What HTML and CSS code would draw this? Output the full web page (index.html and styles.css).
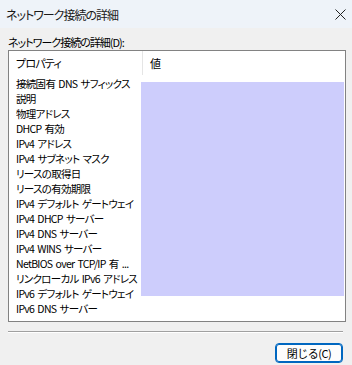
FILE: index.html
```html
<!DOCTYPE html>
<html lang="ja">
<head>
<meta charset="UTF-8">
<title>ネットワーク接続の詳細</title>
<link rel="stylesheet" href="styles.css">
</head>
<body>
<div class="dialog">
    <div class="titlebar">
        <span class="title">ネットワーク接続の詳細</span>
        <span class="close">
            <svg width="11" height="11" viewBox="0 0 11 11"><path d="M0.5 0.5 L10.5 10.5 M10.5 0.5 L0.5 10.5" stroke="#222" stroke-width="1" fill="none"/></svg>
        </span>
    </div>

    <div class="content">
        <div class="caption">ネットワーク接続の詳細(D):</div>
        <div class="listbox">
            <div class="header">
                <div class="col-name">プロパティ</div>
                <div class="col-value">値</div>
            </div>
            <div class="rows">
                <ul class="names">
                    <li>接続固有 DNS サフィックス</li>
                    <li>説明</li>
                    <li>物理アドレス</li>
                    <li>DHCP 有効</li>
                    <li>IPv4 アドレス</li>
                    <li>IPv4 サブネット マスク</li>
                    <li>リースの取得日</li>
                    <li>リースの有効期限</li>
                    <li>IPv4 デフォルト ゲートウェイ</li>
                    <li>IPv4 DHCP サーバー</li>
                    <li>IPv4 DNS サーバー</li>
                    <li>IPv4 WINS サーバー</li>
                    <li>NetBIOS over TCP/IP 有 ...</li>
                    <li>リンクローカル IPv6 アドレス</li>
                    <li>IPv6 デフォルト ゲートウェイ</li>
                    <li>IPv6 DNS サーバー</li>
                </ul>
                <div class="values">
                    <div class="hidden-values"></div>
                </div>
            </div>
        </div>
        <div class="separator"></div>
        <div class="buttons">
            <button type="button" class="btn">閉じる(C)</button>
        </div>
    </div>
</div>
</body>
</html>
```

FILE: styles.css
```css
body {
    margin: 0;
    padding: 0;
    background-color: #f0f0f0;
    font-family: "Noto Sans CJK JP", "Noto Sans", sans-serif;
    font-size: 12px;
    color: #000000;
    font-feature-settings: "palt";
}

.dialog {
    width: 352px;
    height: 365px;
    overflow: hidden;
}

.titlebar {
    height: 28px;
    background-color: #eef3f9;
    display: flex;
    align-items: center;
    justify-content: space-between;
    padding: 0 6px 0 6px;
    box-sizing: border-box;
}

.title {
    font-size: 12px;
    letter-spacing: -1px;
    color: #1a1a1a;
}

.close {
    display: flex;
}

.content {
    padding: 0 6px 0 8px;
}

.caption {
    height: 22px;
    line-height: 14px;
    padding-top: 7px;
    box-sizing: border-box;
    font-size: 11px;
    letter-spacing: -1px;
}

.listbox {
    width: 338px;
    height: 272px;
    border: 1px solid #828282;
    background-color: #ffffff;
    box-sizing: border-box;
}

.header {
    display: flex;
    height: 25px;
    align-items: flex-start;
}

.col-name {
    width: 134px;
    height: 24px;
    line-height: 24px;
    padding-left: 7px;
    box-sizing: border-box;
    border-right: 1px solid #e5e5e5;
    font-size: 11px;
    letter-spacing: -0.8px;
}

.col-value {
    padding-left: 7px;
    line-height: 24px;
    font-size: 11px;
}

.rows {
    display: flex;
}

.names {
    list-style: none;
    margin: 0;
    padding: 0 0 0 7px;
    width: 132px;
    box-sizing: border-box;
}

.names li {
    height: 15px;
    line-height: 15px;
    white-space: nowrap;
    overflow: hidden;
    font-size: 10.5px;
    letter-spacing: -0.7px;
    word-spacing: 1.5px;
}

.values {
    flex: 1;
    padding: 6px 1px 0 0;
}

.hidden-values {
    height: 214px;
    background-color: #cdcdfc;
}

.separator {
    width: 335px;
    height: 0;
    border-top: 1px solid #a0a0a0;
    border-bottom: 1px solid #ffffff;
    margin-top: 9px;
}

.buttons {
    display: flex;
    justify-content: flex-end;
    padding: 10px 3px 0 0;
}

.btn {
    width: 68px;
    height: 20px;
    border: 1px solid #0067c0;
    border-radius: 4px;
    box-shadow: inset 0 0 0 1px #0067c0;
    background-color: #fdfdfd;
    font-family: "Noto Sans CJK JP", sans-serif;
    font-size: 11px;
    letter-spacing: -0.5px;
    padding: 0;
    line-height: 16px;
}
```
